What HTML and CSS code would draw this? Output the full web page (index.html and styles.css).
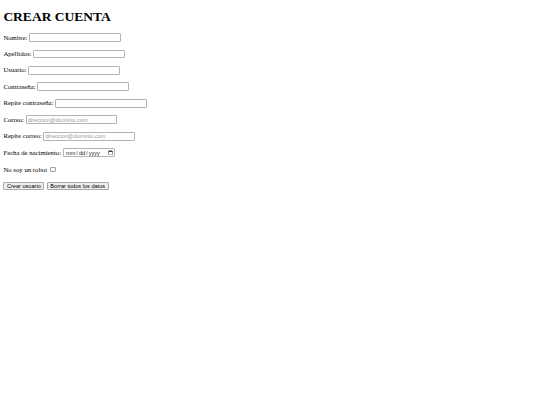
FILE: index.html
```html
<!DOCTYPE html>
<html lang="es">
<head>
<meta charset="utf-8">
<title>Crear cuenta</title>
<link rel="stylesheet" href="styles.css">
</head>
<body>
<h1 class="title">CREAR CUENTA</h1>
<form class="form">
  <p class="row"><label class="label" for="nombre">Nombre:</label><input class="field" id="nombre" type="text"></p>
  <p class="row"><label class="label" for="apellidos">Apellidos:</label><input class="field" id="apellidos" type="text"></p>
  <p class="row"><label class="label" for="usuario">Usuario:</label><input class="field" id="usuario" type="text"></p>
  <p class="row"><label class="label" for="pass">Contraseña:</label><input class="field" id="pass" type="password"></p>
  <p class="row"><label class="label" for="pass2">Repite contraseña:</label><input class="field" id="pass2" type="password"></p>
  <p class="row"><label class="label" for="correo">Correo:</label><input class="field" id="correo" type="email" placeholder="direccion@dominio.com"></p>
  <p class="row"><label class="label" for="correo2">Repite correo:</label><input class="field" id="correo2" type="email" placeholder="direccion@dominio.com"></p>
  <p class="row"><label class="label" for="fecha">Fecha de nacimiento:</label><input class="field date" id="fecha" type="date"></p>
  <p class="row row-center"><label class="label" for="robot">No soy un robot</label><input class="check" id="robot" type="checkbox"></p>
  <p class="row row-center buttons"><button class="btn" type="submit">Crear usuario</button><button class="btn" type="reset">Borrar todos los datos</button></p>
</form>
</body>
</html>
```

FILE: styles.css
```css
html, body {
  background: #ffffff;
}
body {
  margin: 3.375px;
  font-family: "Liberation Serif", "Times New Roman", serif;
  font-size: 6.75px;
  color: #000000;
}
.title {
  font-family: "Liberation Serif", "Times New Roman", serif;
  font-size: 13.5px;
  font-weight: bold;
  margin: 5.6px 0 8.7px;
  line-height: 15.5px;
}
.form {
  margin: 0;
}
.row {
  display: flex;
  align-items: baseline;
  gap: 1.7px;
  height: 9.75px;
  margin: 6.7px 0;
  font-size: 6.75px;
}
.row-center {
  align-items: center;
}
.label {
  line-height: 7.76px;
}
.field {
  box-sizing: border-box;
  width: 91.5px;
  height: 8.9px;
  margin: 0;
  padding: 0 1px;
  border: 1px solid #b4b4b4;
  border-radius: 1px;
  background: #ffffff;
  font-family: "Liberation Sans", Arial, sans-serif;
  font-size: 5.6px;
  color: #000000;
}
.field::placeholder {
  color: #9a9a9a;
}
.date {
  width: 52px;
  padding: 0 1px 0 1.2px;
  color: #222222;
}
.date::-webkit-calendar-picker-indicator {
  margin: 0 0 0 2px;
  padding: 0;
  width: 5px;
  height: 5px;
}
.check {
  appearance: none;
  -webkit-appearance: none;
  box-sizing: border-box;
  width: 5.6px;
  height: 5.6px;
  margin: 0 0 0 1.2px;
  border: 1px solid #a0a0a0;
  border-radius: 1px;
  background: #ffffff;
}
.buttons {
  gap: 2.6px;
}
.btn {
  box-sizing: border-box;
  height: 8.9px;
  margin: 0;
  padding: 0 2.5px;
  border: 1px solid #a8a8a8;
  border-radius: 1px;
  background: #efefef;
  font-family: "Liberation Sans", Arial, sans-serif;
  font-size: 5.6px;
  line-height: 6px;
  color: #000000;
}
```
